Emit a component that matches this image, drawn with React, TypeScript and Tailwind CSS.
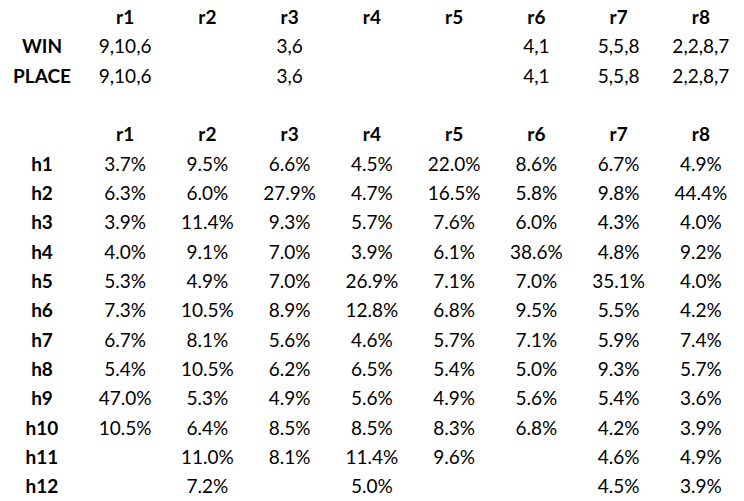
const races = ['r1', 'r2', 'r3', 'r4', 'r5', 'r6', 'r7', 'r8'];

const picks: [string, string[]][] = [
  ['WIN', ['9,10,6', '', '3,6', '', '', '4,1', '5,5,8', '2,2,8,7']],
  ['PLACE', ['9,10,6', '', '3,6', '', '', '4,1', '5,5,8', '2,2,8,7']],
];

const odds: [string, string[]][] = [
  ['h1', ['3.7%', '9.5%', '6.6%', '4.5%', '22.0%', '8.6%', '6.7%', '4.9%']],
  ['h2', ['6.3%', '6.0%', '27.9%', '4.7%', '16.5%', '5.8%', '9.8%', '44.4%']],
  ['h3', ['3.9%', '11.4%', '9.3%', '5.7%', '7.6%', '6.0%', '4.3%', '4.0%']],
  ['h4', ['4.0%', '9.1%', '7.0%', '3.9%', '6.1%', '38.6%', '4.8%', '9.2%']],
  ['h5', ['5.3%', '4.9%', '7.0%', '26.9%', '7.1%', '7.0%', '35.1%', '4.0%']],
  ['h6', ['7.3%', '10.5%', '8.9%', '12.8%', '6.8%', '9.5%', '5.5%', '4.2%']],
  ['h7', ['6.7%', '8.1%', '5.6%', '4.6%', '5.7%', '7.1%', '5.9%', '7.4%']],
  ['h8', ['5.4%', '10.5%', '6.2%', '6.5%', '5.4%', '5.0%', '9.3%', '5.7%']],
  ['h9', ['47.0%', '5.3%', '4.9%', '5.6%', '4.9%', '5.6%', '5.4%', '3.6%']],
  ['h10', ['10.5%', '6.4%', '8.5%', '8.5%', '8.3%', '6.8%', '4.2%', '3.9%']],
  ['h11', ['', '11.0%', '8.1%', '11.4%', '9.6%', '', '4.6%', '4.9%']],
  ['h12', ['', '7.2%', '', '5.0%', '', '', '4.5%', '3.9%']],
];

function HeaderRow() {
  return (
    <>
      <div />
      {races.map((r) => (
        <div key={r} className="flex items-center justify-center font-bold">
          {r}
        </div>
      ))}
    </>
  );
}

function DataRow({ label, cells }: { label: string; cells: string[] }) {
  return (
    <>
      <div className="flex items-center justify-center font-bold">{label}</div>
      {cells.map((c, i) => (
        <div key={i} className="flex items-center justify-center">
          {c}
        </div>
      ))}
    </>
  );
}

export default function App() {
  return (
    <div
      className="min-h-screen w-[744px] bg-white pt-[2px] text-[19px] leading-none text-black"
      style={{ fontFamily: 'Lato, "Open Sans", sans-serif' }}
    >
      <div className="grid grid-cols-[84px_repeat(8,82.25px)] auto-rows-[29.33px]">
        <HeaderRow />
        {picks.map(([label, cells]) => (
          <DataRow key={label} label={label} cells={cells} />
        ))}

        {/* spacer row */}
        <div className="col-span-9" />

        <HeaderRow />
        {odds.map(([label, cells]) => (
          <DataRow key={label} label={label} cells={cells} />
        ))}
      </div>
    </div>
  );
}
